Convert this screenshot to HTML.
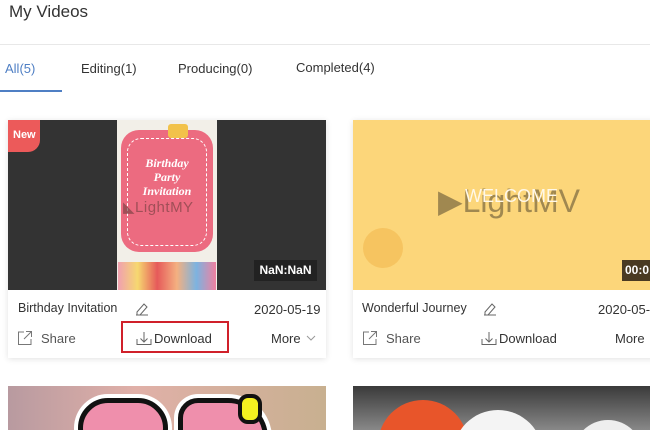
<!DOCTYPE html>
<html style="overflow:hidden"><head><meta charset="utf-8"><style>
*{margin:0;padding:0;box-sizing:border-box}
html,body{width:650px;height:430px;overflow:hidden}
body{background:#fff;font-family:"Liberation Sans",Arial,sans-serif;color:#333;position:relative}
.abs{position:absolute}
.t{font-size:13px;color:#333;white-space:nowrap}
.card{position:absolute;background:#fff;box-shadow:0 1px 6px rgba(0,0,0,.12);overflow:hidden}
svg{display:block}
</style></head><body>
<div class="abs" style="left:9px;top:2px;font-size:17px;color:#333">My Videos</div>
<div class="abs" style="left:0;top:44px;width:650px;height:1px;background:#e8e8e8"></div>
<div class="abs t" style="left:5px;top:61px;color:#4f7fc4">All(5)</div>
<div class="abs" style="left:0;top:90px;width:62px;height:2px;background:#4f7fc4"></div>
<div class="abs t" style="left:81px;top:61px">Editing(1)</div>
<div class="abs t" style="left:178px;top:61px">Producing(0)</div>
<div class="abs t" style="left:296px;top:60px">Completed(4)</div>

<div class="card" style="left:8px;top:120px;width:318px;height:238px">
 <div class="abs" style="left:0;top:0;width:318px;height:170px;background:#333"></div>
 <div class="abs" style="left:109px;top:0;width:100px;height:170px;background:#f2efe8"></div>
 <div class="abs" style="left:113px;top:10px;width:92px;height:122px;background:#ec6b80;border-radius:18px"></div>
 <div class="abs" style="left:119px;top:18px;width:80px;height:108px;border:1px dashed #fff;border-radius:14px"></div>
 <div class="abs" style="left:114px;top:36px;width:90px;text-align:center;color:#fff;font-family:'Liberation Serif',serif;font-style:italic;font-weight:bold;font-size:12px;line-height:14px">Birthday<br>Party<br>Invitation</div>
 <div class="abs" style="left:115px;top:78px;font-size:15px;color:rgba(110,60,60,.6);letter-spacing:.5px">◣LightMY</div>
 <div class="abs" style="left:160px;top:4px;width:20px;height:14px;background:#f2c24a;border-radius:3px"></div>
 <div class="abs" style="left:110px;top:142px;width:98px;height:28px;background:linear-gradient(90deg,#f0a0b0,#f6d870,#e65a5a,#f4b080,#7cb3e0,#f080a0)"></div>
 <div class="abs" style="left:0;top:0;width:32px;height:32px;background:#ec5a5a;border-radius:0 0 12px 0;color:#fff;font-size:11px;font-weight:bold;padding:9px 0 0 5px">New</div>
 <div class="abs" style="left:246px;top:140px;width:63px;height:21px;background:#222;color:#fff;font-weight:bold;font-size:12px;text-align:center;line-height:21px">NaN:NaN</div>
 <div class="abs t" style="left:10px;top:181px;font-size:12.5px">Birthday Invitation</div>
 <svg class="abs" style="left:126px;top:182px" width="16" height="14" viewBox="0 0 16 14"><path d="M2 13h12M3 10l7-8 3 3-7 8H3z" fill="none" stroke="#666" stroke-width="1"/></svg>
 <div class="abs t" style="left:246px;top:182px">2020-05-19</div>
 <svg class="abs" style="left:9px;top:210px" width="16" height="16" viewBox="0 0 16 16"><path d="M7 2H1.5v12.5H14V9M9 1.5h5.5V7M14.5 1.5L7 9" fill="none" stroke="#777" stroke-width="1"/></svg>
 <div class="abs t" style="left:33px;top:211px;color:#555">Share</div>
 <div class="abs" style="left:113px;top:201px;width:108px;height:32px;border:2px solid #d0202a"></div>
 <svg class="abs" style="left:128px;top:210px" width="16" height="16" viewBox="0 0 16 16"><path d="M1 9v5.5h14V9M8 2v10M4.5 8.5L8 12l3.5-3.5" fill="none" stroke="#666" stroke-width="1"/></svg>
 <div class="abs t" style="left:146px;top:211px">Download</div>
 <div class="abs t" style="left:263px;top:211px">More</div>
 <svg class="abs" style="left:298px;top:215px" width="10" height="6" viewBox="0 0 10 6"><path d="M1 1l4 4 4-4" fill="none" stroke="#999"/></svg>
</div>

<div class="card" style="left:353px;top:120px;width:310px;height:238px">
 <div class="abs" style="left:0;top:0;width:310px;height:170px;background:#fcd67a"></div>
 <div class="abs" style="left:10px;top:108px;width:40px;height:40px;border-radius:50%;background:#f6c460"></div>
 <div class="abs" style="left:85px;top:62px;font-size:32px;color:#a08850">▶LightMV</div>
 <div class="abs" style="left:112px;top:66px;font-size:18px;color:#fff8e8">WELCOME</div>
 <div class="abs" style="left:269px;top:140px;width:40px;height:21px;background:#4a3a22;color:#fff;font-weight:bold;font-size:12px;line-height:21px;padding-left:3px">00:0</div>
 <div class="abs t" style="left:9px;top:181px;font-size:12.5px">Wonderful Journey</div>
 <svg class="abs" style="left:129px;top:182px" width="16" height="14" viewBox="0 0 16 14"><path d="M2 13h12M3 10l7-8 3 3-7 8H3z" fill="none" stroke="#666" stroke-width="1"/></svg>
 <div class="abs t" style="left:245px;top:182px">2020-05-1</div>
 <svg class="abs" style="left:9px;top:210px" width="16" height="16" viewBox="0 0 16 16"><path d="M7 2H1.5v12.5H14V9M9 1.5h5.5V7M14.5 1.5L7 9" fill="none" stroke="#777" stroke-width="1"/></svg>
 <div class="abs t" style="left:33px;top:211px;color:#555">Share</div>
 <svg class="abs" style="left:128px;top:210px" width="16" height="16" viewBox="0 0 16 16"><path d="M1 9v5.5h14V9M8 2v10M4.5 8.5L8 12l3.5-3.5" fill="none" stroke="#666" stroke-width="1"/></svg>
 <div class="abs t" style="left:146px;top:211px">Download</div>
 <div class="abs t" style="left:262px;top:211px">More</div>
</div>

<div class="abs" style="left:8px;top:386px;width:318px;height:44px;background:linear-gradient(90deg,#b89aa0,#e0b0a8 40%,#c8b090);overflow:hidden">
 <div class="abs" style="left:70px;top:12px;width:90px;height:60px;border-radius:40px;background:#ef8fac;border:5px solid #111;box-shadow:0 0 0 4px #fff"></div>
 <div class="abs" style="left:170px;top:12px;width:90px;height:50px;border-radius:20px 40px 0 0;background:#ef8fac;border:5px solid #111;box-shadow:0 0 0 4px #fff"></div>
 <div class="abs" style="left:230px;top:8px;width:24px;height:30px;background:#f4f020;border:4px solid #111;border-radius:10px"></div>
</div>
<div class="abs" style="left:353px;top:386px;width:297px;height:44px;background:linear-gradient(#3a3a3a,#888);overflow:hidden">
 <div class="abs" style="left:25px;top:14px;width:90px;height:90px;border-radius:50%;background:#e8552a"></div>
 <div class="abs" style="left:100px;top:24px;width:90px;height:90px;border-radius:50%;background:#f4f4f4"></div>
 <div class="abs" style="left:220px;top:34px;width:70px;height:70px;border-radius:50%;background:#eee"></div>
</div>
</body></html>
